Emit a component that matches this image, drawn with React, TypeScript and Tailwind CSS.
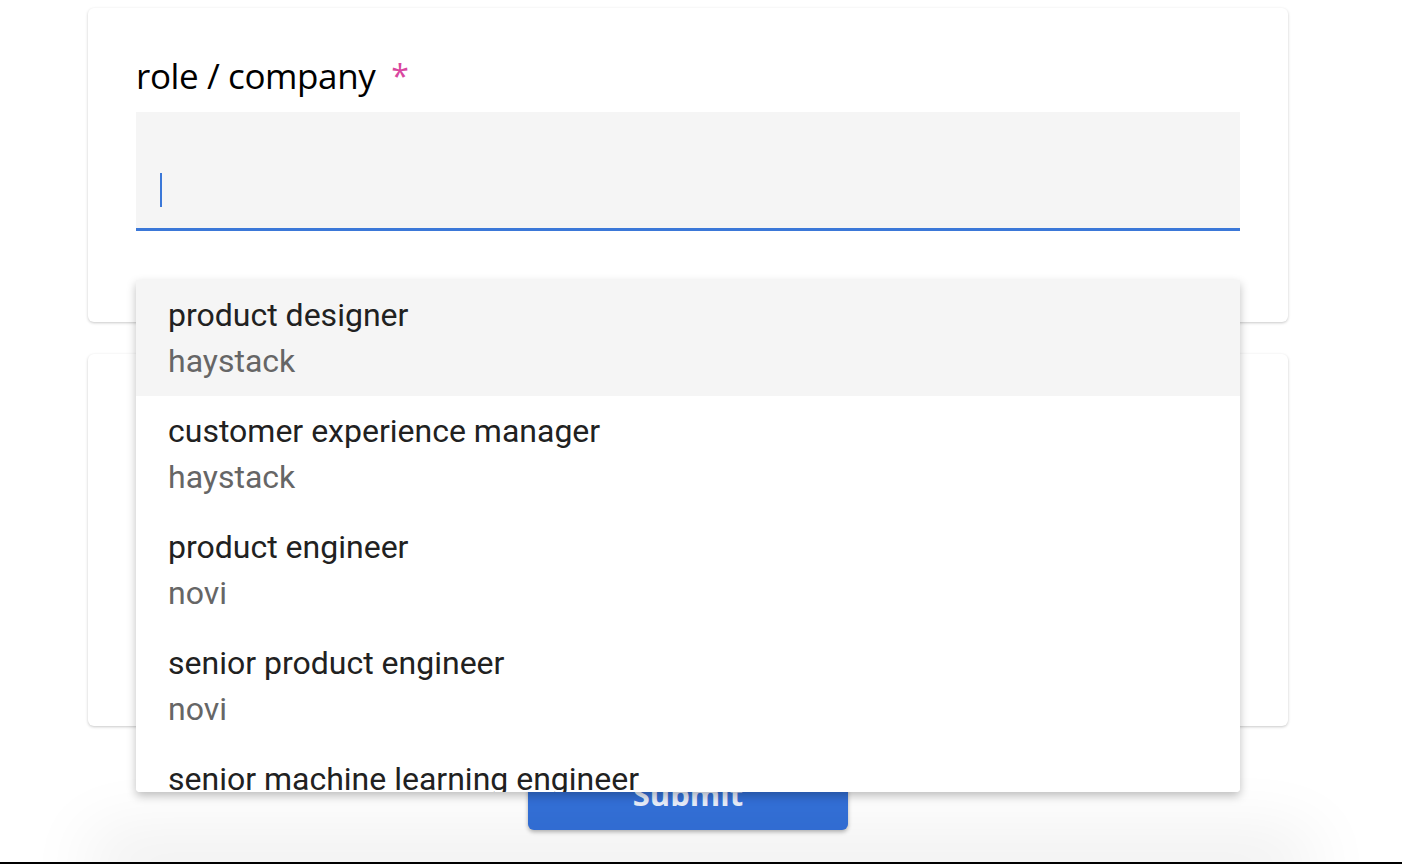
const options = [
  { role: "product designer", company: "haystack" },
  { role: "customer experience manager", company: "haystack" },
  { role: "product engineer", company: "novi" },
  { role: "senior product engineer", company: "novi" },
  { role: "senior machine learning engineer", company: "novi" },
  { role: "software engineer", company: "novi" },
];

export default function App() {
  return (
    <div className="relative h-[864px] overflow-hidden bg-white">
      <div className="flex w-[1376px] flex-col items-center pt-2">
        <div className="relative w-[1200px]">
          {/* role / company card */}
          <div className="h-[314px] rounded-md bg-white px-12 pt-[44px] shadow-[0_1px_3px_rgba(0,0,0,0.22)]">
            <div className="flex items-start font-['Open_Sans',sans-serif] text-[35px] leading-[48px] tracking-[-0.4px] text-black">
              <span>role / company</span>
              <span className="ml-[16px] text-[32px] text-[#d9479f]">*</span>
            </div>
            <div className="mt-3 flex h-[119px] items-end border-b-[3px] border-[#3b78d8] bg-[#f5f5f5] px-6 pb-[21px]">
              <div className="h-[34px] w-[2px] bg-[#3b78d8]" />
            </div>
          </div>

          {/* dropdown */}
          <div className="absolute left-12 top-[272px] z-10 h-[512px] w-[1104px] overflow-hidden rounded-b bg-white shadow-[0_4px_10px_rgba(0,0,0,0.25)]">
            {options.map((o, i) => (
              <div
                key={i}
                className={`px-8 py-3 font-['Roboto',sans-serif] text-[32px] leading-[46px] ${i === 0 ? "bg-[#f5f5f5]" : "bg-white"}`}
              >
                <div className="text-[#212121]">{o.role}</div>
                <div className="text-[#666666]">{o.company}</div>
              </div>
            ))}
          </div>

          {/* second card */}
          <div className="mt-8 h-[372px] rounded-md bg-white shadow-[0_1px_3px_rgba(0,0,0,0.22)]" />

          <div className="mt-[44px] flex justify-center">
            <button className="h-[60px] w-[320px] rounded-md bg-[#3370d8] pb-3 font-['Open_Sans',sans-serif] text-[31px] font-bold leading-[40px] text-[#e8eefb] shadow-[0_2px_4px_rgba(0,0,0,0.3)]">
              Submit
            </button>
          </div>
        </div>
      </div>

      {/* bottom bar */}
      <div className="absolute bottom-0 left-[120px] right-[120px] h-[2px] shadow-[0_0_70px_30px_rgba(0,0,0,0.07)]" />
      <div className="absolute bottom-0 left-0 right-0 h-[2px] bg-black" />
    </div>
  );
}
